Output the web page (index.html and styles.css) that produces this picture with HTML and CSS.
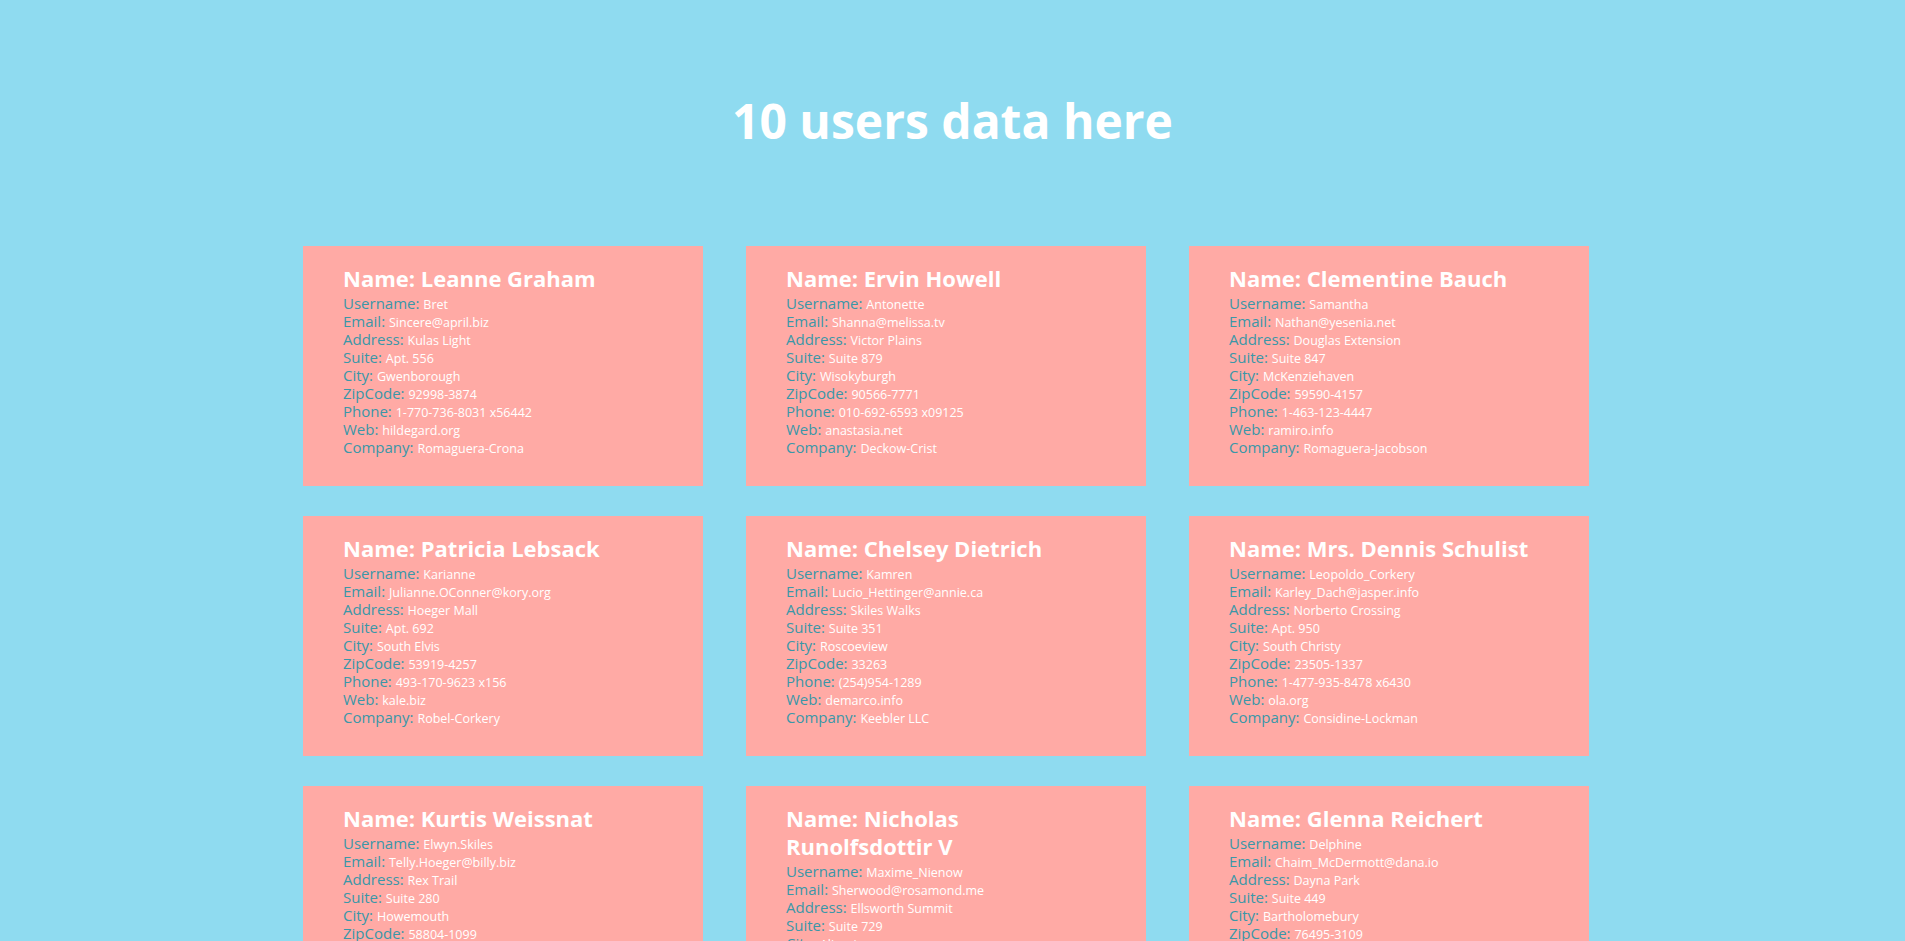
FILE: index.html
```html
<!DOCTYPE html>
<html lang="en">
<head>
<meta charset="utf-8">
<title>Users</title>
<link rel="stylesheet" href="styles.css">
</head>
<body>
<h1 class="title">10 users data here</h1>
<main class="grid">
  <article class="card">
    <h2 class="name">Name: Leanne Graham</h2>
    <div class="row"><span class="label">Username:</span> <span class="val">Bret</span></div>
    <div class="row"><span class="label">Email:</span> <span class="val">Sincere@april.biz</span></div>
    <div class="row"><span class="label">Address:</span> <span class="val">Kulas Light</span></div>
    <div class="row"><span class="label">Suite:</span> <span class="val">Apt. 556</span></div>
    <div class="row"><span class="label">City:</span> <span class="val">Gwenborough</span></div>
    <div class="row"><span class="label">ZipCode:</span> <span class="val">92998-3874</span></div>
    <div class="row"><span class="label">Phone:</span> <span class="val">1-770-736-8031 x56442</span></div>
    <div class="row"><span class="label">Web:</span> <span class="val">hildegard.org</span></div>
    <div class="row"><span class="label">Company:</span> <span class="val">Romaguera-Crona</span></div>
  </article>
  <article class="card">
    <h2 class="name">Name: Ervin Howell</h2>
    <div class="row"><span class="label">Username:</span> <span class="val">Antonette</span></div>
    <div class="row"><span class="label">Email:</span> <span class="val">Shanna@melissa.tv</span></div>
    <div class="row"><span class="label">Address:</span> <span class="val">Victor Plains</span></div>
    <div class="row"><span class="label">Suite:</span> <span class="val">Suite 879</span></div>
    <div class="row"><span class="label">City:</span> <span class="val">Wisokyburgh</span></div>
    <div class="row"><span class="label">ZipCode:</span> <span class="val">90566-7771</span></div>
    <div class="row"><span class="label">Phone:</span> <span class="val">010-692-6593 x09125</span></div>
    <div class="row"><span class="label">Web:</span> <span class="val">anastasia.net</span></div>
    <div class="row"><span class="label">Company:</span> <span class="val">Deckow-Crist</span></div>
  </article>
  <article class="card">
    <h2 class="name">Name: Clementine Bauch</h2>
    <div class="row"><span class="label">Username:</span> <span class="val">Samantha</span></div>
    <div class="row"><span class="label">Email:</span> <span class="val">Nathan@yesenia.net</span></div>
    <div class="row"><span class="label">Address:</span> <span class="val">Douglas Extension</span></div>
    <div class="row"><span class="label">Suite:</span> <span class="val">Suite 847</span></div>
    <div class="row"><span class="label">City:</span> <span class="val">McKenziehaven</span></div>
    <div class="row"><span class="label">ZipCode:</span> <span class="val">59590-4157</span></div>
    <div class="row"><span class="label">Phone:</span> <span class="val">1-463-123-4447</span></div>
    <div class="row"><span class="label">Web:</span> <span class="val">ramiro.info</span></div>
    <div class="row"><span class="label">Company:</span> <span class="val">Romaguera-Jacobson</span></div>
  </article>
  <article class="card">
    <h2 class="name">Name: Patricia Lebsack</h2>
    <div class="row"><span class="label">Username:</span> <span class="val">Karianne</span></div>
    <div class="row"><span class="label">Email:</span> <span class="val">Julianne.OConner@kory.org</span></div>
    <div class="row"><span class="label">Address:</span> <span class="val">Hoeger Mall</span></div>
    <div class="row"><span class="label">Suite:</span> <span class="val">Apt. 692</span></div>
    <div class="row"><span class="label">City:</span> <span class="val">South Elvis</span></div>
    <div class="row"><span class="label">ZipCode:</span> <span class="val">53919-4257</span></div>
    <div class="row"><span class="label">Phone:</span> <span class="val">493-170-9623 x156</span></div>
    <div class="row"><span class="label">Web:</span> <span class="val">kale.biz</span></div>
    <div class="row"><span class="label">Company:</span> <span class="val">Robel-Corkery</span></div>
  </article>
  <article class="card">
    <h2 class="name">Name: Chelsey Dietrich</h2>
    <div class="row"><span class="label">Username:</span> <span class="val">Kamren</span></div>
    <div class="row"><span class="label">Email:</span> <span class="val">Lucio_Hettinger@annie.ca</span></div>
    <div class="row"><span class="label">Address:</span> <span class="val">Skiles Walks</span></div>
    <div class="row"><span class="label">Suite:</span> <span class="val">Suite 351</span></div>
    <div class="row"><span class="label">City:</span> <span class="val">Roscoeview</span></div>
    <div class="row"><span class="label">ZipCode:</span> <span class="val">33263</span></div>
    <div class="row"><span class="label">Phone:</span> <span class="val">(254)954-1289</span></div>
    <div class="row"><span class="label">Web:</span> <span class="val">demarco.info</span></div>
    <div class="row"><span class="label">Company:</span> <span class="val">Keebler LLC</span></div>
  </article>
  <article class="card">
    <h2 class="name">Name: Mrs. Dennis Schulist</h2>
    <div class="row"><span class="label">Username:</span> <span class="val">Leopoldo_Corkery</span></div>
    <div class="row"><span class="label">Email:</span> <span class="val">Karley_Dach@jasper.info</span></div>
    <div class="row"><span class="label">Address:</span> <span class="val">Norberto Crossing</span></div>
    <div class="row"><span class="label">Suite:</span> <span class="val">Apt. 950</span></div>
    <div class="row"><span class="label">City:</span> <span class="val">South Christy</span></div>
    <div class="row"><span class="label">ZipCode:</span> <span class="val">23505-1337</span></div>
    <div class="row"><span class="label">Phone:</span> <span class="val">1-477-935-8478 x6430</span></div>
    <div class="row"><span class="label">Web:</span> <span class="val">ola.org</span></div>
    <div class="row"><span class="label">Company:</span> <span class="val">Considine-Lockman</span></div>
  </article>
  <article class="card">
    <h2 class="name">Name: Kurtis Weissnat</h2>
    <div class="row"><span class="label">Username:</span> <span class="val">Elwyn.Skiles</span></div>
    <div class="row"><span class="label">Email:</span> <span class="val">Telly.Hoeger@billy.biz</span></div>
    <div class="row"><span class="label">Address:</span> <span class="val">Rex Trail</span></div>
    <div class="row"><span class="label">Suite:</span> <span class="val">Suite 280</span></div>
    <div class="row"><span class="label">City:</span> <span class="val">Howemouth</span></div>
    <div class="row"><span class="label">ZipCode:</span> <span class="val">58804-1099</span></div>
    <div class="row"><span class="label">Phone:</span> <span class="val">210.067.6132</span></div>
    <div class="row"><span class="label">Web:</span> <span class="val">elvis.io</span></div>
    <div class="row"><span class="label">Company:</span> <span class="val">Johns Group</span></div>
  </article>
  <article class="card">
    <h2 class="name">Name: Nicholas Runolfsdottir V</h2>
    <div class="row"><span class="label">Username:</span> <span class="val">Maxime_Nienow</span></div>
    <div class="row"><span class="label">Email:</span> <span class="val">Sherwood@rosamond.me</span></div>
    <div class="row"><span class="label">Address:</span> <span class="val">Ellsworth Summit</span></div>
    <div class="row"><span class="label">Suite:</span> <span class="val">Suite 729</span></div>
    <div class="row"><span class="label">City:</span> <span class="val">Aliyaview</span></div>
    <div class="row"><span class="label">ZipCode:</span> <span class="val">45169</span></div>
    <div class="row"><span class="label">Phone:</span> <span class="val">586.493.6943 x140</span></div>
    <div class="row"><span class="label">Web:</span> <span class="val">jacynthe.com</span></div>
    <div class="row"><span class="label">Company:</span> <span class="val">Abernathy Group</span></div>
  </article>
  <article class="card">
    <h2 class="name">Name: Glenna Reichert</h2>
    <div class="row"><span class="label">Username:</span> <span class="val">Delphine</span></div>
    <div class="row"><span class="label">Email:</span> <span class="val">Chaim_McDermott@dana.io</span></div>
    <div class="row"><span class="label">Address:</span> <span class="val">Dayna Park</span></div>
    <div class="row"><span class="label">Suite:</span> <span class="val">Suite 449</span></div>
    <div class="row"><span class="label">City:</span> <span class="val">Bartholomebury</span></div>
    <div class="row"><span class="label">ZipCode:</span> <span class="val">76495-3109</span></div>
    <div class="row"><span class="label">Phone:</span> <span class="val">(775)976-6794 x41206</span></div>
    <div class="row"><span class="label">Web:</span> <span class="val">conrad.com</span></div>
    <div class="row"><span class="label">Company:</span> <span class="val">Yost and Sons</span></div>
  </article>
  <article class="card">
    <h2 class="name">Name: Clementina DuBuque</h2>
    <div class="row"><span class="label">Username:</span> <span class="val">Moriah.Stanton</span></div>
    <div class="row"><span class="label">Email:</span> <span class="val">Rey.Padberg@karina.biz</span></div>
    <div class="row"><span class="label">Address:</span> <span class="val">Kattie Turnpike</span></div>
    <div class="row"><span class="label">Suite:</span> <span class="val">Suite 198</span></div>
    <div class="row"><span class="label">City:</span> <span class="val">Lebsackbury</span></div>
    <div class="row"><span class="label">ZipCode:</span> <span class="val">31428-2261</span></div>
    <div class="row"><span class="label">Phone:</span> <span class="val">024-648-3804</span></div>
    <div class="row"><span class="label">Web:</span> <span class="val">ambrose.net</span></div>
    <div class="row"><span class="label">Company:</span> <span class="val">Hoeger LLC</span></div>
  </article>
</main>
</body>
</html>
```
FILE: styles.css
```css
html, body {
  margin: 0;
  padding: 0;
}
body {
  background: #8fdbf0;
  font-family: "Open Sans", "Noto Sans", sans-serif;
  color: #ffffff;
}
.title {
  margin: 0;
  padding: 91px 0 0;
  height: 155px;
  box-sizing: border-box;
  text-align: center;
  font-size: 48px;
  line-height: 60px;
  font-weight: 700;
  color: #ffffff;
}
.grid {
  display: grid;
  grid-template-columns: repeat(3, 400px);
  column-gap: 43px;
  row-gap: 30px;
  justify-content: center;
  padding: 91px 13px 40px 0;
}
.card {
  background: #ffaaa5;
  padding: 18px 40px 30px;
  align-self: start;
}
.name {
  margin: 0 0 2px;
  font-size: 22px;
  line-height: 28px;
  font-weight: 700;
  color: #ffffff;
}
.row {
  font-size: 15px;
  line-height: 18px;
  height: 18px;
  white-space: nowrap;
}
.label {
  color: #3a97a8;
}
.val {
  font-size: 12.5px;
  line-height: 1;
  color: #ffffff;
}
```
